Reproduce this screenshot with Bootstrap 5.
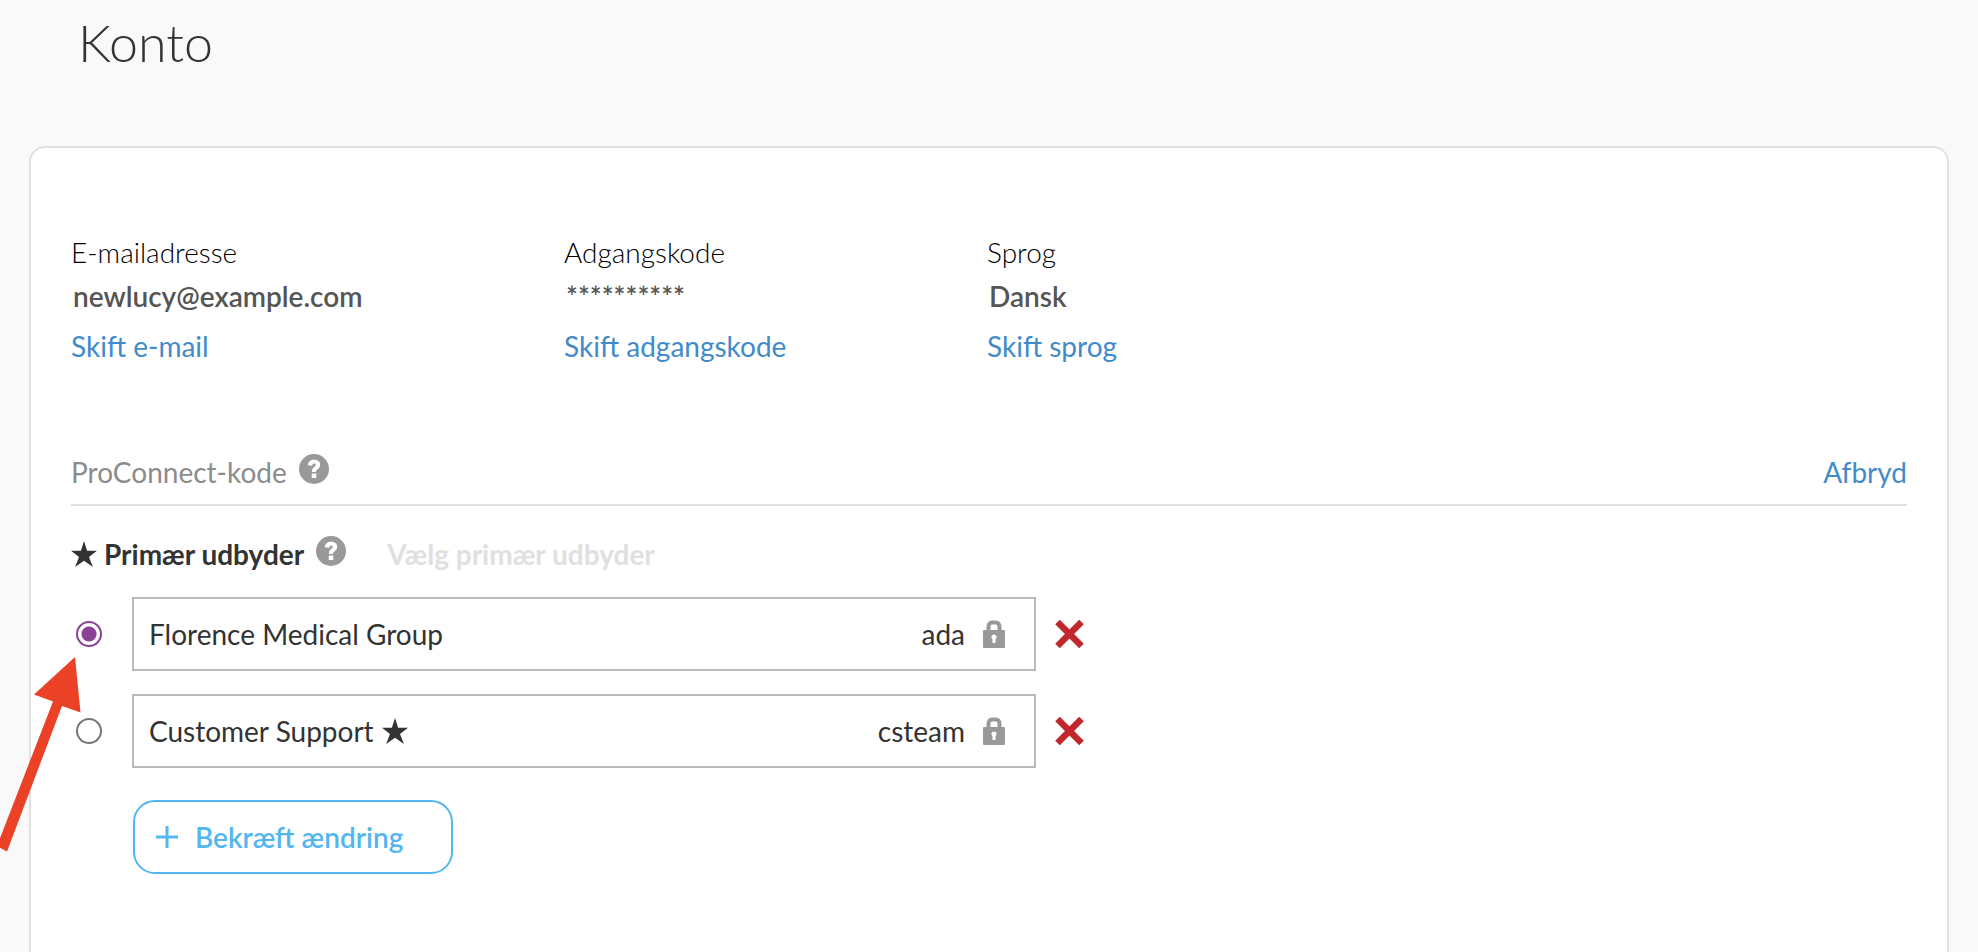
<!DOCTYPE html>
<html lang="da">
<head>
<meta charset="utf-8">
<meta name="viewport" content="width=device-width, initial-scale=1">
<title>Konto</title>
<link href="https://cdn.jsdelivr.net/npm/bootstrap@5.3.0/dist/css/bootstrap.min.css" rel="stylesheet">
<style>
  body { font-family: Lato, "Liberation Sans", sans-serif; font-size: 28px; line-height: 36px; color: #333; background: #f9f9f9; overflow-x: hidden; }
  a { color: #428bca; text-decoration: none; }
  svg { display: block; flex: none; }
  .page-title { font-size: 52px; line-height: 64px; font-weight: 300; padding: 10px 78px 0; margin-bottom: 72px; }
  .panel { background: #fff; border: 2px solid #e0e0e0; border-radius: 16px; margin: 0 29px; padding: 86px 40px 80px; min-height: calc(100vh - 106px); }
  .account-grid { display: grid; grid-template-columns: 493px 423px 1fr; margin-bottom: 90px; }
  .field-name { font-weight: 300; color: #000; margin-bottom: 8px; }
  .field-value { font-weight: 600; color: #555; padding-left: 2px; margin-bottom: 14px; }
  .section-head { border-bottom: 2px solid #e0e0e0; padding-bottom: 14px; margin-bottom: 30px; }
  .muted-head { color: #8c8c8c; }
  .disconnect { font-variant-ligatures: none; }
  .help { border: 0; background: none; padding: 0 0 6px; margin-left: 12px; }
  .primary-head { margin-bottom: 25px; font-weight: 700; }
  .primary-star { margin-right: 7px; }
  .pick { color: #e0e0e0; margin-left: 41px; }
  .provider { margin-bottom: 23px; }
  .provider-radio { appearance: none; width: 26px; height: 26px; border: 2px solid #767676; border-radius: 50%; margin: 0 30px 0 5px; flex: none; }
  .provider-radio:checked { border-color: #8b4295; background: radial-gradient(circle, #8b4295 7px, #fff 8px); }
  .provider-box { width: 904px; height: 74px; border: 2px solid #bbb; padding: 0 29px 0 15px; }
  .provider-user { margin: 0 18px 0 auto; }
  .remove { border: 0; background: none; padding: 0; margin-left: 19px; }
  .confirm { color: #54b6ef; border: 2px solid #54b6ef; border-radius: 22px; background: #fff; width: 320px; height: 74px; padding: 0 21px; gap: 17px; margin: 32px 0 0 62px; font-weight: 600; }
  .pointer { position: absolute; left: 0; top: 656px; }
</style>
</head>
<body class="position-relative">
<svg width="0" height="0" class="position-absolute" aria-hidden="true">
  <symbol id="help" viewBox="0 0 30 30"><circle cx="15" cy="15" r="15" fill="#999"/><path d="M8.800 11.200C9 7.800 11.400 5.800 15.200 5.800c3.400 0 6 1.900 6 4.900 0 2.300-1.200 3.500-2.600 4.500-1.200.9-1.500 1.400-1.500 2.700h-4.200c0-2.600.6-3.800 2.200-5 1.100-.8 1.600-1.200 1.600-2 0-.9-.6-1.500-1.600-1.500-1.100 0-1.700.7-1.800 2.300zM12.700 19.600h4.600v4.400h-4.600z" fill="#fff"/></symbol>
  <symbol id="star" viewBox="0 0 26 26"><path d="M13 0l3.100 9.800H26l-8 6.100 3.900 10.100L13 19.800 4.100 26 8 15.900 0 9.800h9.900z" fill="#333"/></symbol>
  <symbol id="lock" viewBox="0 0 22 28"><path d="M5.500 12V6.500a3.500 4 0 0 1 3.500-4h4a3.500 4 0 0 1 3.500 4V12" fill="none" stroke="#999" stroke-width="4"/><rect y="10" width="22" height="18" rx="1" fill="#999"/><path d="M11 14.500a2.600 2.600 0 0 1 1.500 4.700V23h-3v-3.800A2.600 2.600 0 0 1 11 14.500z" fill="#fff"/></symbol>
  <symbol id="cross" viewBox="0 0 29 29"><path d="M2.500 2l24 24M26.500 2l-24 24" stroke="#c1272d" stroke-width="6.500"/></symbol>
</svg>

<h1 class="page-title">Konto</h1>

<main class="panel">
  <section class="account-grid">
    <div>
      <div class="field-name">E-mailadresse</div>
      <div class="field-value">newlucy@example.com</div>
      <a href="#">Skift e-mail</a>
    </div>
    <div>
      <div class="field-name">Adgangskode</div>
      <div class="field-value">**********</div>
      <a href="#">Skift adgangskode</a>
    </div>
    <div>
      <div class="field-name">Sprog</div>
      <div class="field-value">Dansk</div>
      <a href="#">Skift sprog</a>
    </div>
  </section>

  <section>
    <div class="section-head d-flex align-items-center">
      <span class="muted-head">ProConnect-kode</span>
      <button type="button" class="help" aria-label="Hjælp"><svg width="30" height="30"><use href="#help"/></svg></button>
      <a href="#" class="disconnect ms-auto">Afbryd</a>
    </div>
    <div class="primary-head d-flex align-items-center">
      <svg class="primary-star" width="26" height="26"><use href="#star"/></svg>
      <span>Primær udbyder</span>
      <button type="button" class="help" aria-label="Hjælp"><svg width="30" height="30"><use href="#help"/></svg></button>
      <span class="pick">Vælg primær udbyder</span>
    </div>

    <div class="provider d-flex align-items-center">
      <input class="provider-radio" type="radio" name="provider" id="florence" checked>
      <label class="provider-box d-flex align-items-center" for="florence">
        <span>Florence Medical Group</span>
        <span class="provider-user">ada</span>
        <svg width="22" height="28"><use href="#lock"/></svg>
      </label>
      <button type="button" class="remove" aria-label="Fjern"><svg width="29" height="29"><use href="#cross"/></svg></button>
    </div>
    <div class="provider d-flex align-items-center">
      <input class="provider-radio" type="radio" name="provider" id="support">
      <label class="provider-box d-flex align-items-center" for="support">
        <span>Customer Support</span>
        <svg class="ms-2" width="26" height="26"><use href="#star"/></svg>
        <span class="provider-user">csteam</span>
        <svg width="22" height="28"><use href="#lock"/></svg>
      </label>
      <button type="button" class="remove" aria-label="Fjern"><svg width="29" height="29"><use href="#cross"/></svg></button>
    </div>

    <button type="button" class="confirm d-flex align-items-center">
      <svg width="22" height="22" viewBox="0 0 22 22"><path d="M11 0v22M0 11h22" stroke="currentColor" stroke-width="3"/></svg>
      <span>Bekræft ændring</span>
    </button>
  </section>
</main>

<svg class="pointer" width="84" height="198" viewBox="0 0 84 198" aria-hidden="true"><path d="M75 1L34 38.500l19 7L-3 190l10 5.500L62 50l18.500 6.500z" fill="#eb4127"/></svg>
<script src="https://cdn.jsdelivr.net/npm/bootstrap@5.3.0/dist/js/bootstrap.bundle.min.js"></script>
</body>
</html>
